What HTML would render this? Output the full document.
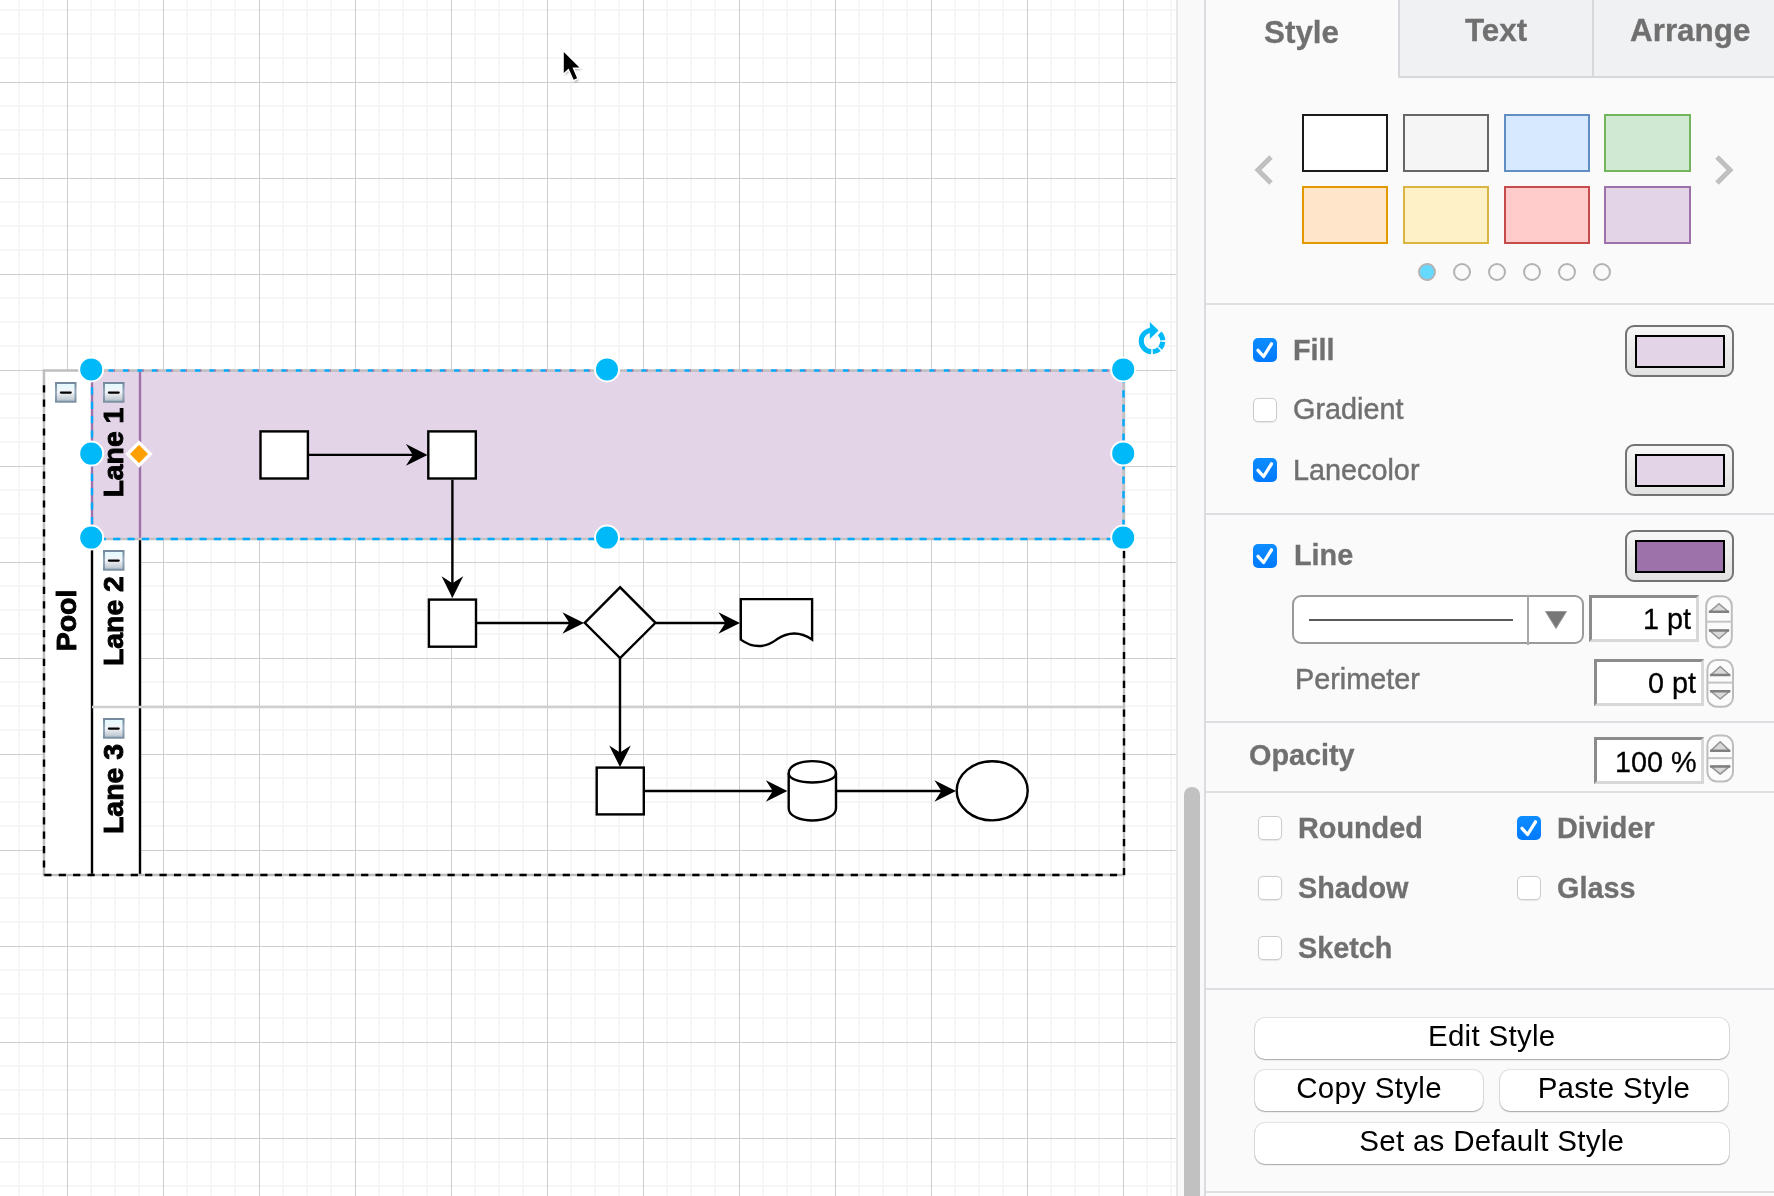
<!DOCTYPE html>
<html><head><meta charset="utf-8">
<style>
html,body{margin:0;padding:0;width:1774px;height:1196px;overflow:hidden;background:#fff;font-family:"Liberation Sans",sans-serif;}
.t,.btn,.inp span,#cv{will-change:transform}
#cv{position:absolute;left:0;top:0;width:1177px;height:1196px;}
#strip{position:absolute;left:1176px;top:0;width:29px;height:1196px;background:#f9f9f9;border-left:2px solid #e8e8e8;box-sizing:border-box}
#thumb{position:absolute;left:1184px;top:787px;width:16px;height:420px;border-radius:8px;background:#c1c1c1}
#panel{position:absolute;left:1204px;top:0;width:570px;height:1196px;background:#fafafa;border-left:2px solid #dadce0;box-sizing:border-box}
.t{position:absolute;white-space:nowrap;color:#707070;font-size:28.8px;line-height:1;-webkit-text-stroke:0.45px #707070}
.b{font-weight:bold;-webkit-text-stroke:0.3px #707070}
.hr{position:absolute;left:1206px;width:568px;height:2px;background:#dddee2}
.tab{position:absolute;top:0;height:78px;background:#f0f1f3;border-left:2px solid #d6d8dc;border-bottom:2px solid #d6d8dc;box-sizing:border-box}
.sw{position:absolute;width:86px;height:58px;border:2.4px solid;box-sizing:border-box}
.dot{position:absolute;width:18px;height:18px;border-radius:50%;border:2.2px solid #b3b3b3;box-sizing:border-box;top:263px}
.cb{position:absolute;width:24px;height:24px;border-radius:5px;box-sizing:border-box}
.on{background:linear-gradient(#0c8dff,#0079ff)}
.off{background:#fff;border:1px solid #cdcdcd;box-shadow:0 0.5px 1px rgba(0,0,0,.08)}
.cbtn{position:absolute;left:1625px;width:109px;height:52px;border:2px solid #747474;border-radius:9px;background:linear-gradient(#f7f7f7,#e2e2e2);box-sizing:border-box}
.cbtn i{position:absolute;left:7.5px;top:7.5px;right:7.5px;bottom:7.5px;border:2.4px solid #000;display:block}
.inp{position:absolute;width:110px;height:47px;background:#fff;box-sizing:border-box;border-top:3.5px solid #8c8c8c;border-left:3.5px solid #8c8c8c;border-bottom:3.5px solid #d8d8d8;border-right:3.5px solid #d8d8d8}
.inp span{position:absolute;right:5px;top:7px;font-size:28.8px;color:#000;line-height:1;-webkit-text-stroke:0.3px #000}
.spin{position:absolute;width:27px;height:52px}
.btn{position:absolute;height:41px;background:#fff;border-radius:10px;box-shadow:0 0 0 1px rgba(0,0,0,.09),0 1px 1.5px rgba(0,0,0,.28);color:#000;font-size:29.5px;text-align:center;line-height:36px;letter-spacing:0.3px}
</style></head><body>
<svg id="cv" width="1177" height="1196" viewBox="0 0 1177 1196">
<defs>
<linearGradient id="cbo" x1="0" y1="0" x2="0" y2="1"><stop offset="0" stop-color="#71869a"/><stop offset="0.5" stop-color="#95abbc"/><stop offset="1" stop-color="#788da0"/></linearGradient>
<linearGradient id="cbi" x1="0" y1="0" x2="0" y2="1"><stop offset="0" stop-color="#e6faff"/><stop offset="0.5" stop-color="#f2f4f6"/><stop offset="1" stop-color="#b9c4ce"/></linearGradient>

</defs>
<rect width="1177" height="1196" fill="#fff"/>
<path d="M19 0V1196M43 0V1196M91 0V1196M115 0V1196M139 0V1196M187 0V1196M211 0V1196M235 0V1196M283 0V1196M307 0V1196M331 0V1196M379 0V1196M403 0V1196M427 0V1196M475 0V1196M499 0V1196M523 0V1196M571 0V1196M595 0V1196M619 0V1196M667 0V1196M691 0V1196M715 0V1196M763 0V1196M787 0V1196M811 0V1196M859 0V1196M883 0V1196M907 0V1196M955 0V1196M979 0V1196M1003 0V1196M1051 0V1196M1075 0V1196M1099 0V1196M1147 0V1196M1171 0V1196M0 10H1177M0 34H1177M0 58H1177M0 106H1177M0 130H1177M0 154H1177M0 202H1177M0 226H1177M0 250H1177M0 298H1177M0 322H1177M0 346H1177M0 394H1177M0 418H1177M0 442H1177M0 490H1177M0 514H1177M0 538H1177M0 586H1177M0 610H1177M0 634H1177M0 682H1177M0 706H1177M0 730H1177M0 778H1177M0 802H1177M0 826H1177M0 874H1177M0 898H1177M0 922H1177M0 970H1177M0 994H1177M0 1018H1177M0 1066H1177M0 1090H1177M0 1114H1177M0 1162H1177M0 1186H1177" stroke="#f6f6f6" stroke-width="2"/>
<path d="M67.5 0V1196M163.5 0V1196M259.5 0V1196M355.5 0V1196M451.5 0V1196M547.5 0V1196M643.5 0V1196M739.5 0V1196M835.5 0V1196M931.5 0V1196M1027.5 0V1196M1123.5 0V1196M0 82.5H1177M0 178.5H1177M0 274.5H1177M0 370.5H1177M0 466.5H1177M0 562.5H1177M0 658.5H1177M0 754.5H1177M0 850.5H1177M0 946.5H1177M0 1042.5H1177M0 1138.5H1177" stroke="#cfcfcf" stroke-width="1"/>
<!-- pool & lanes -->
<rect x="44" y="370.5" width="48" height="504.5" fill="#fff"/>
<rect x="92" y="370.5" width="1031.5" height="168.5" fill="#e4d4e8"/>
<rect x="92" y="538.5" width="48" height="336.5" fill="#fff"/>
<path d="M140 370.5V538.5" stroke="#9d71aa" stroke-width="2.4"/>
<path d="M92 538.5V875M140 538.5V875" stroke="#000" stroke-width="2.4"/>
<path d="M92 707H1124" stroke="#cfcfcf" stroke-width="2.4"/>
<rect x="44" y="370.5" width="1080" height="504.5" fill="none" stroke="#bdbdbd" stroke-width="2.4"/>
<path d="M44 385.2V875" fill="none" stroke="#000" stroke-width="2.4" stroke-dasharray="7.2 7.2"/><path d="M44.3 875H1124M1124 551.1V876" fill="none" stroke="#000" stroke-width="2.4" stroke-dasharray="7.2 7.2"/>
<path d="M92 370.5V538.5" stroke="#9d71aa" stroke-width="2.4"/>
<path d="M92 539H1123.5V370.5" fill="none" stroke="#c2c2c2" stroke-width="2.4"/>
<path d="M92 370.5V539H1123.5V370.5" fill="none" stroke="#00abff" stroke-width="2.4" stroke-dasharray="7.2 7.2" stroke-dashoffset="-2.4"/><path d="M92 370.5H1123.5" fill="none" stroke="#00abff" stroke-width="2.4" stroke-dasharray="5 9.4" stroke-dashoffset="-2.2"/><path d="M92 370.5H1123.5" fill="none" stroke="#9d71aa" stroke-width="2.4" stroke-dasharray="1.4 13" stroke-dashoffset="-7.2"/>
<!-- labels -->
<g font-family="Liberation Sans" font-weight="bold" font-size="27.6" fill="#000" stroke="#000" stroke-width="0.9">
<text transform="translate(123.3,497.6) rotate(-90) scale(1.03,1)">Lane 1</text>
<text transform="translate(122.9,666.1) rotate(-90) scale(1.03,1)">Lane 2</text>
<text transform="translate(123.2,834) rotate(-90) scale(1.03,1)">Lane 3</text>
<text transform="translate(75.6,651.2) rotate(-90) scale(1.03,1)">Pool</text>
</g>
<g transform="translate(55,382)"><rect x="0" y="0" width="21.5" height="20.7" fill="url(#cbo)"/><rect x="2" y="2" width="17.5" height="16.7" fill="url(#cbi)"/><rect x="4.8" y="9.4" width="12" height="2.3" rx="1.1" fill="#000"/></g>
<g transform="translate(103,382)"><rect x="0" y="0" width="21.5" height="20.7" fill="url(#cbo)"/><rect x="2" y="2" width="17.5" height="16.7" fill="url(#cbi)"/><rect x="4.8" y="9.4" width="12" height="2.3" rx="1.1" fill="#000"/></g>
<g transform="translate(103,550)"><rect x="0" y="0" width="21.5" height="20.7" fill="url(#cbo)"/><rect x="2" y="2" width="17.5" height="16.7" fill="url(#cbi)"/><rect x="4.8" y="9.4" width="12" height="2.3" rx="1.1" fill="#000"/></g>
<g transform="translate(103,718)"><rect x="0" y="0" width="21.5" height="20.7" fill="url(#cbo)"/><rect x="2" y="2" width="17.5" height="16.7" fill="url(#cbi)"/><rect x="4.8" y="9.4" width="12" height="2.3" rx="1.1" fill="#000"/></g>
<!-- shapes -->
<g fill="#fff" stroke="#000" stroke-width="2.4">
<rect x="260.5" y="431.4" width="47.4" height="47.1"/>
<rect x="428.3" y="431.4" width="47.5" height="47.1"/>
<rect x="428.9" y="599.6" width="47.1" height="47.1"/>
<path d="M584.7 622.8L620.1 587.3L655.5 622.8L620.1 658Z"/>
<path d="M740.8 599.1H812.1V639.6Q794.3 627.3 776.5 639.6Q758.7 652.6 740.8 639.6Z"/>
<rect x="596.7" y="767.6" width="47.1" height="46.8"/>
<path d="M788.7 773.3C788.7 757.1 836 757.1 836 773.3V808.3C836 824.5 788.7 824.5 788.7 808.3Z"/>
<path d="M788.7 773.3C788.7 785.5 836 785.5 836 773.3" fill="none"/>
<ellipse cx="992.2" cy="790.8" rx="35.5" ry="29.6"/>
</g>
<g stroke="#000" stroke-width="2.4" fill="none">
<path d="M309 454.9H414M452.4 479.7V584M476.2 623H570M656 623H726M620 658.3V753M644.3 791H773M836.7 791H942"/>
</g>
<g fill="#000">
<path d="M427.5 454.9L405.9 444.1L412.9 454.9L405.9 465.7Z"/>
<path d="M452.4 597.9L441.6 576.3L452.4 583.3L463.2 576.3Z"/>
<path d="M584 623L562.4 612.2L569.4 623L562.4 633.8Z"/>
<path d="M740 623L718.4 612.2L725.4 623L718.4 633.8Z"/>
<path d="M620 767L609.2 745.4L620 752.4L630.8 745.4Z"/>
<path d="M787.4 791L765.8 780.2L772.8 791L765.8 801.8Z"/>
<path d="M956 791L934.4 780.2L941.4 791L934.4 801.8Z"/>
</g>
<!-- handles -->
<g fill="#00b9f8" stroke="#fff" stroke-width="2">
<circle cx="91.2" cy="369.4" r="12"/>
<circle cx="607" cy="369.4" r="12"/>
<circle cx="1123.2" cy="369.4" r="12"/>
<circle cx="91.2" cy="453.6" r="12"/>
<circle cx="1123.2" cy="453.4" r="12"/>
<circle cx="91.2" cy="537.6" r="12"/>
<circle cx="607" cy="537.6" r="12"/>
<circle cx="1123.2" cy="537.6" r="12"/>
</g>
<path d="M139 442.6L150.4 454L139 465.4L127.6 454Z" fill="#ffa000" stroke="#fff" stroke-width="3.2"/>
<!-- rotate -->
<g fill="none" stroke="#00b9f8" stroke-width="5.1">
<path d="M1152 330.2A10.8 10.8 0 0 0 1151.25 351.77"/>
<path d="M1152.75 351.77A10.8 10.8 0 0 0 1159.09 349.15M1160.15 348.09A10.8 10.8 0 0 0 1162.77 341.75M1162.77 340.25A10.8 10.8 0 0 0 1159.64 333.36"/>
</g>
<path d="M1149.8 322.1L1158.6 330.6L1149.8 339Z" fill="#00b9f8"/>
<!-- cursor -->
<filter id="sh" x="-50%" y="-50%" width="200%" height="200%"><feGaussianBlur stdDeviation="1.3"/></filter>
<path d="M564.8 53.5V75.6L569.6 71L574.7 82.3L578.6 80.7L574 70.1H581.4Z" fill="#000" opacity="0.35" filter="url(#sh)"/>
<path d="M563.8 52V73.1L568.6 68.5L573.7 79.8L577.1 78.2L572.5 67.6H579.4Z" fill="#000" stroke="#fff" stroke-width="3" stroke-linejoin="round" paint-order="stroke"/>
</svg>
<div id="strip"></div>
<div id="thumb"></div>
<div id="panel"></div>
<!-- tabs -->
<div class="tab" style="left:1398px;width:195px"></div>
<div class="tab" style="left:1592px;width:195px"></div>
<div class="t b" style="left:1264px;top:16.5px;font-size:31.4px">Style</div>
<div class="t b" style="left:1464.5px;top:14.5px;font-size:31.4px">Text</div>
<div class="t b" style="left:1630px;top:14.5px;font-size:31.4px">Arrange</div>
<!-- swatches -->
<svg style="position:absolute;left:1250px;top:154px" width="30" height="34"><path d="M21 3L8 16L21 29" fill="none" stroke="#c0c0c0" stroke-width="5"/></svg>
<svg style="position:absolute;left:1710px;top:154px" width="30" height="34"><path d="M7 3L20 16L7 29" fill="none" stroke="#c0c0c0" stroke-width="5"/></svg>
<div class="sw" style="left:1302px;top:114px;background:#fff;border-color:#1a1a1a"></div>
<div class="sw" style="left:1403px;top:114px;background:#f5f5f5;border-color:#666"></div>
<div class="sw" style="left:1504px;top:114px;background:#d7e9fe;border-color:#628fc3"></div>
<div class="sw" style="left:1604px;top:114px;width:87px;background:#d0e9d2;border-color:#73b55c"></div>
<div class="sw" style="left:1302px;top:186px;background:#ffe5c9;border-color:#e29800"></div>
<div class="sw" style="left:1403px;top:186px;background:#fff1c7;border-color:#dcb441"></div>
<div class="sw" style="left:1504px;top:186px;background:#ffcccb;border-color:#c64c4c"></div>
<div class="sw" style="left:1604px;top:186px;width:87px;background:#e4d4e8;border-color:#9d71aa"></div>
<div class="dot" style="left:1417.5px;background:#66d9ff"></div>
<div class="dot" style="left:1452.6px"></div>
<div class="dot" style="left:1487.7px"></div>
<div class="dot" style="left:1522.8px"></div>
<div class="dot" style="left:1557.9px"></div>
<div class="dot" style="left:1593.3px"></div>
<div class="hr" style="top:303px"></div>
<!-- fill section -->
<div class="cb on" style="left:1253px;top:338px"></div>
<div class="cb off" style="left:1253px;top:398px"></div>
<div class="cb on" style="left:1253px;top:458px"></div>
<div class="t b" style="left:1293px;top:335.5px">Fill</div>
<div class="t" style="left:1293.3px;top:395px">Gradient</div>
<div class="t" style="left:1293px;top:455.5px">Lanecolor</div>
<div class="cbtn" style="top:325px"><i style="background:#e4d4e8"></i></div>
<div class="cbtn" style="top:444px"><i style="background:#e4d4e8"></i></div>
<div class="hr" style="top:513px"></div>
<!-- line section -->
<div class="cb on" style="left:1253px;top:544px"></div>
<div class="t b" style="left:1293.7px;top:541px">Line</div>
<div class="cbtn" style="top:530px"><i style="background:#9d71aa"></i></div>
<div style="position:absolute;left:1291.8px;top:595px;width:292px;height:48.5px;border:2px solid #9a9a9a;border-radius:9px;background:#fff;box-sizing:border-box"></div>
<div style="position:absolute;left:1527.3px;top:596px;width:2px;height:49px;background:#a8a8a8"></div>
<div style="position:absolute;left:1309px;top:619px;width:204px;height:2.2px;background:#5a5a5a"></div>
<svg style="position:absolute;left:1544px;top:610px" width="24" height="20"><path d="M1.5 1.5H22.5L12 18.5Z" fill="#777" stroke="#999" stroke-width="1" stroke-linejoin="round"/></svg>
<div class="inp" style="left:1588.6px;top:595.3px;width:110.4px"><span style="right:4.5px">1 pt</span></div>
<div class="t" style="left:1295.4px;top:665px">Perimeter</div>
<div class="inp" style="left:1594.4px;top:659px"><span>0 pt</span></div>
<div class="hr" style="top:721px"></div>
<div class="t b" style="left:1249px;top:741px">Opacity</div>
<div class="inp" style="left:1594.4px;top:737.3px"><span style="top:8px">100 %</span></div>
<div class="hr" style="top:791px"></div>
<!-- spinners -->
<!-- options -->
<div class="cb off" style="left:1258px;top:816px"></div>
<div class="cb off" style="left:1258px;top:876px"></div>
<div class="cb off" style="left:1258px;top:936px"></div>
<div class="cb on" style="left:1517px;top:816px"></div>
<div class="cb off" style="left:1517px;top:876px"></div>
<div class="t b" style="left:1298.3px;top:813.5px">Rounded</div>
<div class="t b" style="left:1298.3px;top:873.5px">Shadow</div>
<div class="t b" style="left:1298.3px;top:933.5px">Sketch</div>
<div class="t b" style="left:1557.4px;top:813.5px">Divider</div>
<div class="t b" style="left:1557.4px;top:873.5px">Glass</div>
<div class="hr" style="top:988px"></div>
<!-- buttons -->
<div class="btn" style="left:1254.5px;top:1017.6px;width:473.5px">Edit Style</div>
<div class="btn" style="left:1254.5px;top:1069.6px;width:228.2px">Copy Style</div>
<div class="btn" style="left:1500.2px;top:1069.6px;width:227.8px">Paste Style</div>
<div class="btn" style="left:1254.5px;top:1122.7px;width:473.5px">Set as Default Style</div>
<div class="hr" style="top:1191px"></div>
<!-- checkmarks -->
<svg style="position:absolute;left:0;top:0;pointer-events:none" width="1774" height="1196">
<rect x="1706.2" y="596.2" width="25.6" height="51.1" rx="9.5" fill="#fbfbfb" stroke="#bdbdbd" stroke-width="2"/><path d="M1706.2 621.7H1731.8" stroke="#c4c4c4" stroke-width="2"/><path d="M1709.3 612L1719 603.8L1728.7 612ZM1709.3 630.2L1719 638.8L1728.7 630.2Z" fill="#d9d9d9" stroke="#929292" stroke-width="1.5" stroke-linejoin="round"/><path d="M1709 611.7H1729M1709 630.5H1729" stroke="#808080" stroke-width="2.4"/><rect x="1707.4" y="660" width="25.6" height="46.8" rx="9.5" fill="#fbfbfb" stroke="#bdbdbd" stroke-width="2"/><path d="M1707.4 682.6H1733.0" stroke="#c4c4c4" stroke-width="2"/><path d="M1710.5 675.3L1720.2 666.5L1729.9 675.3ZM1710.5 691L1720.2 699L1729.9 691Z" fill="#d9d9d9" stroke="#929292" stroke-width="1.5" stroke-linejoin="round"/><path d="M1710.2 675.0H1730.2M1710.2 691.3H1730.2" stroke="#808080" stroke-width="2.4"/><rect x="1707.4" y="735.5" width="25.6" height="46" rx="9.5" fill="#fbfbfb" stroke="#bdbdbd" stroke-width="2"/><path d="M1707.4 758.1H1733.0" stroke="#c4c4c4" stroke-width="2"/><path d="M1710.5 751.1L1720.2 741.8L1729.9 751.1ZM1710.5 766.2L1720.2 774.1L1729.9 766.2Z" fill="#d9d9d9" stroke="#929292" stroke-width="1.5" stroke-linejoin="round"/><path d="M1710.2 750.8000000000001H1730.2M1710.2 766.5H1730.2" stroke="#808080" stroke-width="2.4"/>
<g fill="none" stroke="#fff" stroke-width="3.3" stroke-linecap="round" stroke-linejoin="round"><path d="M1258 350.3L1263.6 356.5L1271.5 343.8"/><path d="M1258 470.3L1263.6 476.5L1271.5 463.8"/><path d="M1258 556.3L1263.6 562.5L1271.5 549.8"/><path d="M1522 828.3L1527.6 834.5L1535.5 821.8"/></g>
</svg>
</body></html>
